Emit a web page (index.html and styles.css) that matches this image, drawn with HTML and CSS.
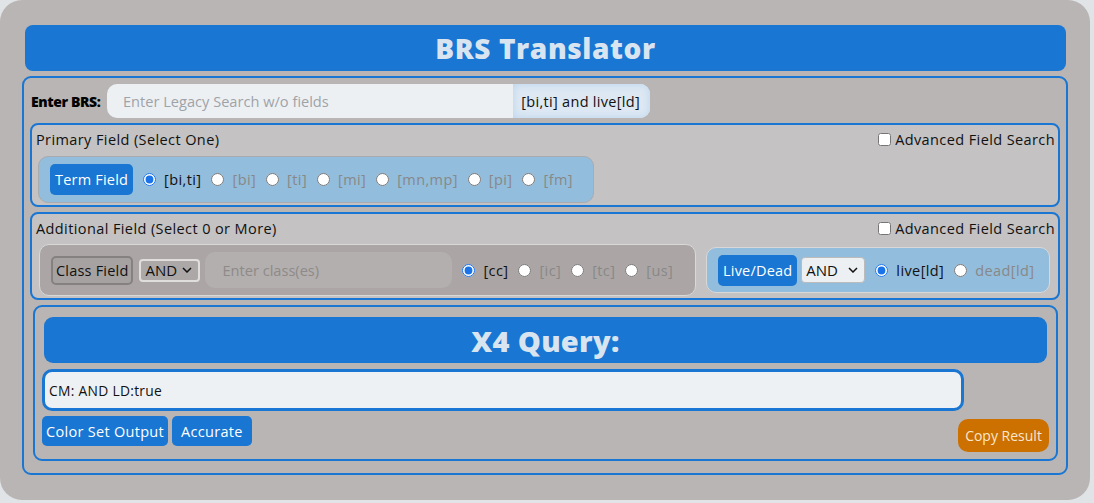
FILE: index.html
```html
<!DOCTYPE html>
<html>
<head>
<meta charset="utf-8">
<link rel="stylesheet" href="styles.css">
</head>
<body>
<div class="app">
  <div class="title-bar">BRS Translator</div>
  <div class="main-box">
    <div class="enter-row">
      <span class="enter-label">Enter BRS:</span>
      <div class="enter-input">
        <input class="legacy-input" type="text" placeholder="Enter Legacy Search w/o fields">
        <span class="preview">[bi,ti] and live[ld]</span>
      </div>
    </div>

    <div class="field-box primary">
      <div class="field-head">
        <span class="field-title">Primary Field (Select One)</span>
        <label class="adv"><input type="checkbox" class="chk">Advanced Field Search</label>
      </div>
      <div class="pill blue-pill term-pill">
        <span class="btn">Term Field</span>
        <label class="opt on"><input type="radio" name="p" checked>[bi,ti]</label>
        <label class="opt"><input type="radio" name="p">[bi]</label>
        <label class="opt"><input type="radio" name="p">[ti]</label>
        <label class="opt"><input type="radio" name="p">[mi]</label>
        <label class="opt"><input type="radio" name="p">[mn,mp]</label>
        <label class="opt"><input type="radio" name="p">[pi]</label>
        <label class="opt"><input type="radio" name="p">[fm]</label>
      </div>
    </div>

    <div class="field-box additional">
      <div class="field-head">
        <span class="field-title">Additional Field (Select 0 or More)</span>
        <label class="adv"><input type="checkbox" class="chk">Advanced Field Search</label>
      </div>
      <div class="add-row">
        <div class="pill grey-pill">
          <span class="btn btn-grey">Class Field</span>
          <span class="sel sel-grey">AND<svg class="chev" viewBox="0 0 10 6" width="10" height="6"><path d="M1 1 L5 5 L9 1" fill="none" stroke="#111" stroke-width="1.5"/></svg></span>
          <input class="class-input" type="text" placeholder="Enter class(es)">
          <label class="opt on"><input type="radio" name="c" checked>[cc]</label>
          <label class="opt"><input type="radio" name="c">[ic]</label>
          <label class="opt"><input type="radio" name="c">[tc]</label>
          <label class="opt"><input type="radio" name="c">[us]</label>
        </div>
        <div class="pill blue-pill live-pill">
          <span class="btn">Live/Dead</span>
          <span class="sel sel-light">AND<svg class="chev" viewBox="0 0 10 6" width="10" height="6"><path d="M1 1 L5 5 L9 1" fill="none" stroke="#111" stroke-width="1.5"/></svg></span>
          <label class="opt on"><input type="radio" name="l" checked>live[ld]</label>
          <label class="opt"><input type="radio" name="l">dead[ld]</label>
        </div>
      </div>
    </div>

    <div class="x4-box">
      <div class="x4-title">X4 Query:</div>
      <div class="output">CM: AND LD:true</div>
      <div class="bottom-row">
        <div class="left-btns">
          <span class="btn2">Color Set Output</span>
          <span class="btn2">Accurate</span>
        </div>
        <span class="copy">Copy Result</span>
      </div>
    </div>
  </div>
</div>
</body>
</html>
```

FILE: styles.css
```css
* { box-sizing: border-box; }
html, body { margin: 0; padding: 0; }
body {
  background: #e1e4e7;
  font-family: "Open Sans", "Liberation Sans", sans-serif;
  width: 1094px;
  height: 503px;
  overflow: hidden;
}
.app {
  width: 1090px;
  height: 500px;
  background: #b9b5b4;
  border-radius: 22px;
  padding: 25px 22px 0 22px;
}
.title-bar {
  margin: 0 2px 0 3px;
  height: 46px;
  background: #1976d2;
  border-radius: 8px;
  color: #d9e4f1;
  font-weight: 800;
  font-size: 28px;
  letter-spacing: 0.6px;
  display: flex;
  align-items: center;
  justify-content: center;
}
.main-box {
  margin-top: 5px;
  height: 399px;
  border: 2px solid #1976d2;
  border-radius: 9px;
  padding: 6px 6px 0 6px;
}
.enter-row {
  display: flex;
  align-items: center;
  height: 34px;
}
.enter-label {
  font-weight: 800;
  font-size: 14px;
  color: #000;
  width: 77px;
  padding-left: 1px;
  letter-spacing: -0.4px;
  white-space: nowrap;
}
.enter-input {
  width: 543px;
  height: 34px;
  background: #edf0f3;
  border-radius: 10px;
  display: flex;
  align-items: center;
  overflow: hidden;
}
.legacy-input {
  flex: 1;
  min-width: 0;
  height: 34px;
  border: none;
  outline: none;
  background: transparent;
  padding-left: 16px;
  font-family: "Open Sans", sans-serif;
  font-size: 14.6px;
  color: #333;
}
.legacy-input::placeholder { color: #9ea3a8; }
.preview {
  font-size: 14.5px;
  letter-spacing: 0.3px;
  color: #111;
  padding: 0 10px 0 8px;
  height: 34px;
  display: flex;
  align-items: center;
  background: #dde8f3;
  box-shadow: inset 0 0 8px #b9d3ec;
  white-space: nowrap;
}
.field-box {
  margin-top: 5px;
  border: 2px solid #1976d2;
  border-radius: 8px;
  background: #c4c2c2;
  padding: 3px 3px 3px 4px;
}
.primary { height: 84px; }
.additional { height: 88px; }
.field-head {
  display: flex;
  justify-content: space-between;
  align-items: center;
  height: 22px;
}
.field-title {
  font-size: 14.5px;
  letter-spacing: 0.4px;
  color: #111;
}
.adv {
  display: flex;
  align-items: center;
  font-size: 14.5px;
  letter-spacing: 0.4px;
  color: #111;
}
.chk {
  margin: 0 4px 0 0;
  width: 13px;
  height: 13px;
}
.pill {
  display: inline-flex;
  align-items: center;
  border: 1px solid #d8d8d8;
  border-radius: 10px;
  padding: 0 11px;
}
.blue-pill { background: #92bddd; }
.grey-pill { background: #aba6a5; height: 52px; width: 657px; }
.term-pill {
  margin: 6px 0 0 2px;
  height: 47px;
  width: 556px;
  border-color: #a9acae;
}
.btn {
  background: #1976d2;
  color: #fff;
  font-size: 14.5px;
  letter-spacing: 0.2px;
  border-radius: 5px;
  height: 31px;
  padding: 0 5px;
  display: flex;
  align-items: center;
  white-space: nowrap;
}
.btn-grey {
  background: #a6a2a1;
  color: #111;
  border: 2px solid #858180;
  height: 29px;
  padding: 0 3px;
}
.opt {
  display: inline-flex;
  align-items: center;
  font-size: 14.5px;
  letter-spacing: 0.4px;
  color: #888;
  white-space: nowrap;
}
.opt.on { color: #111; }
.opt input {
  margin: 0 8px 0 10px;
  width: 13px;
  height: 13px;
  accent-color: #1a73e8;
}
.add-row {
  display: flex;
  align-items: center;
  margin: 5px 0 0 3px;
  gap: 10px;
}
.sel {
  display: flex;
  align-items: center;
  justify-content: space-between;
  font-size: 15px;
  color: #111;
  border-radius: 4px;
  padding: 0 6px 0 4px;
  margin-left: 6px;
}
.sel-grey {
  width: 61px;
  height: 23px;
  background: #aca8a7;
  border: 2px solid #e0dedd;
}
.sel-light {
  width: 64px;
  height: 26px;
  background: #edf0f3;
  border: 1px solid #bbb;
  margin-left: 4px;
}
.chev { display: block; }
.class-input {
  width: 247px;
  height: 36px;
  margin-left: 5px;
  border: none;
  outline: none;
  border-radius: 10px;
  background: #b3afae;
  padding-left: 17px;
  font-family: "Open Sans", sans-serif;
  font-size: 14.6px;
  margin-right: 0;
}
.class-input::placeholder { color: #8e8a89; }
.live-pill {
  height: 46px;
  width: 344px;
}
.x4-box {
  margin: 5px 2px 0 3px;
  height: 156px;
  border: 2px solid #1976d2;
  border-radius: 9px;
  padding: 10px 8px 7px 7px;
}
.x4-title {
  margin: 0 1px 0 2px;
  height: 46px;
  background: #1976d2;
  border-radius: 9px;
  color: #d9e4f1;
  font-weight: 800;
  font-size: 29px;
  letter-spacing: 0.3px;
  display: flex;
  align-items: center;
  justify-content: center;
}
.output {
  margin-top: 6px;
  width: 922px;
  height: 42px;
  border: 3px solid #1976d2;
  border-radius: 10px;
  background: #edf1f4;
  font-size: 13.8px;
  letter-spacing: 0.3px;
  color: #111;
  padding-left: 4px;
  display: flex;
  align-items: center;
}
.bottom-row {
  display: flex;
  justify-content: space-between;
  margin-top: 5px;
  height: 36px;
}
.left-btns {
  display: flex;
  gap: 4px;
  align-self: flex-start;
}
.btn2 {
  background: #1976d2;
  color: #fff;
  font-size: 14.5px;
  letter-spacing: 0.3px;
  border-radius: 5px;
  height: 30px;
  padding: 0 4px;
  display: flex;
  align-items: center;
  white-space: nowrap;
}
.btn2 + .btn2 { padding: 0 9px; }
.copy {
  align-self: flex-end;
  background: #cc7000;
  color: #f7e7cf;
  font-size: 14px;
  border-radius: 10px;
  height: 33px;
  width: 91px;
  display: flex;
  align-items: center;
  justify-content: center;
  margin-right: -1px;
}
```
